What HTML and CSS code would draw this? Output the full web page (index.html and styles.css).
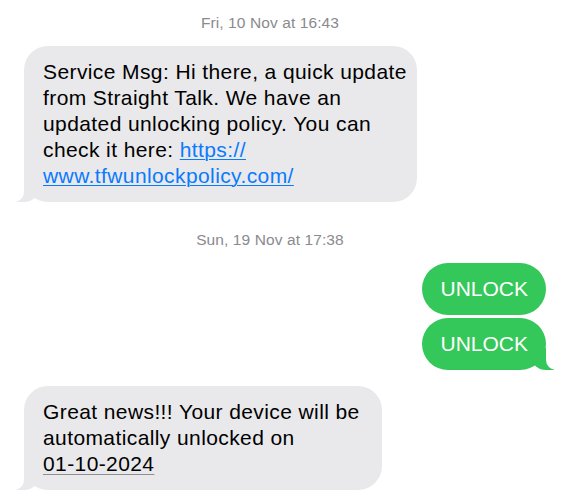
FILE: index.html
```html
<!DOCTYPE html>
<html>
<head>
<meta charset="utf-8">
<link rel="stylesheet" href="styles.css">
</head>
<body>
<div class="chat">
  <div class="stamp">Fri, 10 Nov at 16:43</div>
  <div class="row in first">
    <div class="bubble gray tail wide">Service Msg: Hi there, a quick update<br>from Straight Talk. We have an<br>updated unlocking policy. You can<br>check it here: <a class="link" href="#">https://<br>www.tfwunlockpolicy.com/</a></div>
  </div>
  <div class="stamp second">Sun, 19 Nov at 17:38</div>
  <div class="row out">
    <div class="bubble green">UNLOCK</div>
  </div>
  <div class="row out tight">
    <div class="bubble green tail">UNLOCK</div>
  </div>
  <div class="row in third">
    <div class="bubble gray tail">Great news!!! Your device will be<br>automatically unlocked on<br><span class="date">01-10-2024</span></div>
  </div>
</div>
</body>
</html>
```
FILE: styles.css
```css
html, body {
  margin: 0;
  padding: 0;
  background: #ffffff;
}
.chat {
  width: 570px;
  height: 500px;
  overflow: hidden;
  display: flex;
  flex-direction: column;
  font-family: "Liberation Sans", Arial, sans-serif;
}
.stamp {
  font-size: 15.5px;
  line-height: 20px;
  color: #8a8a8e;
  text-align: center;
  padding-right: 30px;
  padding-top: 13px;
  letter-spacing: 0.1px;
}
.stamp.second {
  padding-top: 28px;
}
.row {
  display: flex;
}
.row.in {
  justify-content: flex-start;
  padding-left: 24px;
}
.row.out {
  justify-content: flex-end;
  padding-right: 24px;
}
.row.first {
  margin-top: 13px;
}
.row.out {
  margin-top: 13px;
}
.row.out.tight {
  margin-top: 3px;
}
.row.third {
  margin-top: 16px;
}
.bubble {
  position: relative;
  font-size: 21px;
  line-height: 26px;
  padding: 13px 22px 13px 19px;
  border-radius: 24px;
  color: #000;
  letter-spacing: 0.4px;
}
.bubble.wide {
  padding-right: 10px;
}
.gray {
  background: #e9e9eb;
}
.green {
  background: #34c759;
  color: #fff;
  border-radius: 26px;
  padding: 13px 18px;
  letter-spacing: 0;
}
.link {
  color: #0a7aff;
  text-decoration: underline;
  text-decoration-thickness: 1px;
  text-underline-offset: 2px;
}
.date {
  text-decoration: underline;
  text-decoration-color: #8e8e93;
  text-decoration-thickness: 1px;
  text-underline-offset: 3px;
}
.gray.tail::before {
  content: "";
  position: absolute;
  bottom: 0;
  left: -8px;
  width: 22px;
  height: 22px;
  background: #e9e9eb;
  border-bottom-right-radius: 14px 12px;
}
.gray.tail::after {
  content: "";
  position: absolute;
  bottom: 0;
  left: -26px;
  width: 26px;
  height: 24px;
  background: #ffffff;
  border-bottom-right-radius: 10px;
}
.green.tail::before {
  content: "";
  position: absolute;
  bottom: 0;
  right: -8px;
  width: 22px;
  height: 22px;
  background: #34c759;
  border-bottom-left-radius: 14px 12px;
}
.green.tail::after {
  content: "";
  position: absolute;
  bottom: 0;
  right: -26px;
  width: 26px;
  height: 24px;
  background: #ffffff;
  border-bottom-left-radius: 10px;
}
```
